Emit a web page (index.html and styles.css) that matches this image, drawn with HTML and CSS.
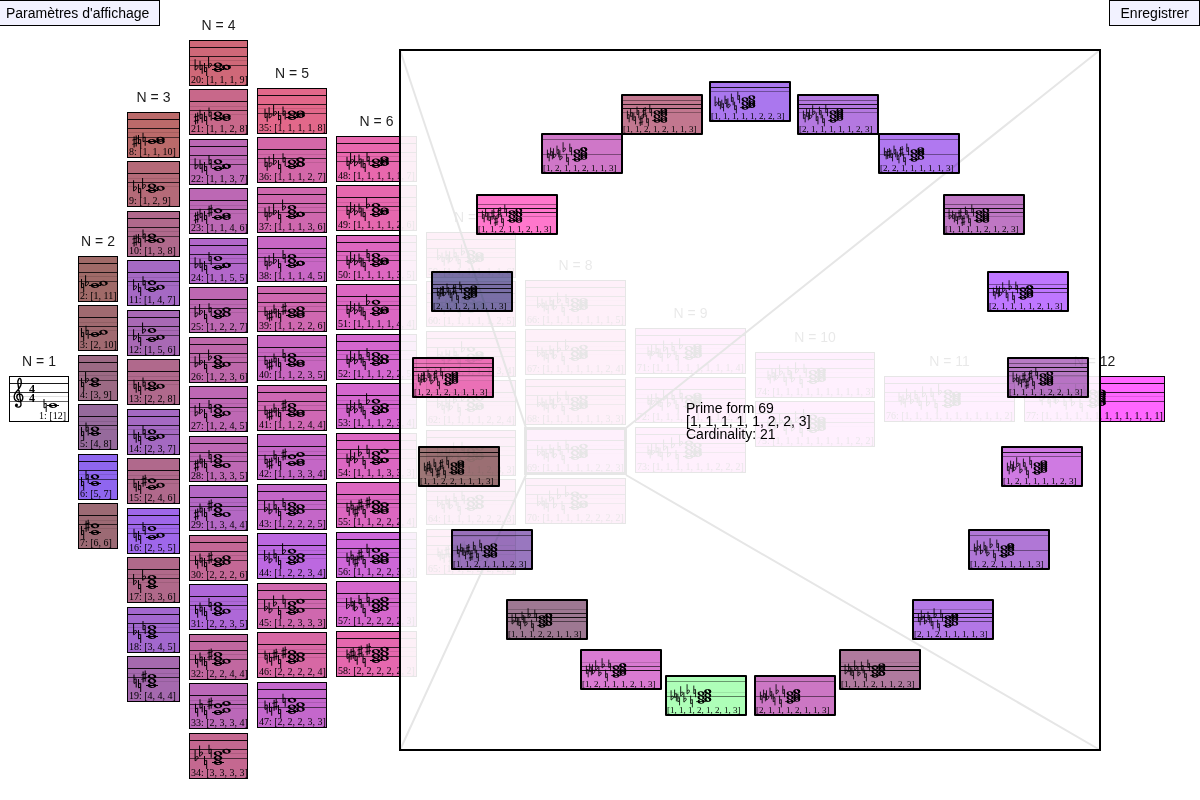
FILE: index.html
```html
<!DOCTYPE html>
<html lang="fr">
<head>
<meta charset="utf-8">
<title>Formes premières</title>
<link rel="stylesheet" href="styles.css">
</head>
<body>
<svg class="defs" aria-hidden="true">
  <defs>
    <path id="whole" fill-rule="evenodd" d="M-4.3 0C-4.3-1.6-2.3-2.5 0-2.5S4.3-1.6 4.3 0 2.3 2.5 0 2.5-4.3 1.6-4.3 0ZM-1.9-.8C-1.7-1.8-.5-2 .4-1.4 1.5-.8 2.1.1 1.9.9 1.6 1.8.5 1.9-.5 1.3-1.4.8-2.1 0-1.9-.8Z"/>
    <path id="flat" fill="none" stroke="#000" d="M-1.4-8V2.8C0 2.2 1.6.8 1.6-.6 1.6-1.8 0-1.8-1.4-.4"/>
    <path id="natural" fill="none" stroke="#000" d="M-1-6.5V2.4L1.2 1.6M1.2 6.5V-2.2L-1-1.5"/>
    <path id="sharp" fill="none" stroke="#000" d="M-.9-5V6M1.2-6V5M-2.6-1.4L2.8-2.8M-2.6 2.8L2.8 1.4"/>
  </defs>
</svg>
<header class="toolbar">
  <button class="tool tool-settings" type="button">Paramètres d'affichage</button>
  <button class="tool tool-save" type="button">Enregistrer</button>
</header>
<main class="stage">
  <section class="columns" id="columns"></section>
  <svg class="leaders" aria-hidden="true">
    <path d="M400 50L526 428M1100 50L626 428M400 750L526 475M1100 750L626 475"/>
  </svg>
  <section class="panel" id="panel">
    <p class="caption">Prime form 69<br>[1, 1, 1, 1, 1, 2, 2, 3]<br>Cardinality: 21</p>
  </section>
</main>
<script src="app.js"></script>
</body>
</html>
```
FILE: styles.css
```css
body {
  margin: 0;
  background: #fff;
  color: #000;
  font: 14px "Liberation Sans", Arial, sans-serif;
  overflow: hidden;
}

.defs {
  position: absolute;
  width: 0;
  height: 0;
}

.toolbar {
  position: absolute;
  inset: 0 0 auto;
  z-index: 2;
  display: flex;
  justify-content: space-between;
  pointer-events: none;
}

.tool {
  height: 26px;
  padding: 0 10px;
  border: 1px solid #000;
  background: #f2f2ff;
  color: #000;
  font: inherit;
  pointer-events: auto;
}

.tool-settings {
  padding: 0 10px 0 6px;
  border-left: 0;
}

.tool-save {
  padding: 0 10px 0 11px;
}

.stage {
  position: relative;
  min-height: 100vh;
}

.columns {
  display: flex;
  align-items: flex-start;
  gap: 9px;
  padding-left: 9px;
}

.column {
  flex: none;
  padding-top: calc(370px - 24px * var(--count));
}

.column-title {
  display: flex;
  justify-content: center;
  margin: 0;
  color: #1c1c1c;
  font-size: 14px;
  font-weight: 400;
  line-height: 30px;
  white-space: nowrap;
}

.card {
  box-sizing: border-box;
  display: grid;
  height: 46px;
  margin-bottom: 3px;
  border: 1px solid #000;
  overflow: hidden;
}

.card:nth-of-type(even) {
  margin-bottom: 4px;
}

.card.selected {
  outline: 3px solid #000;
  outline-offset: -2px;
}

.score,
.label {
  grid-area: 1 / 1;
}

.score {
  width: 100%;
  height: 100%;
}

.label {
  align-self: end;
  padding-left: 1px;
  font: 10px/10px "Liberation Serif", "Times New Roman", serif;
  white-space: nowrap;
}

.first .label {
  justify-self: end;
  padding-right: 2px;
}

.meter {
  font: bold 12px "Liberation Serif", "Times New Roman", serif;
}

.leaders {
  position: absolute;
  top: 0;
  left: 0;
  width: 1200px;
  height: 800px;
  fill: none;
  stroke: #000;
  stroke-width: 2px;
}

.panel {
  position: absolute;
  top: 49px;
  left: 399px;
  width: 698px;
  height: 698px;
  border: 2px solid #000;
  background: rgba(255, 255, 255, 0.9);
}

.caption {
  position: absolute;
  top: 351px;
  left: 285px;
  margin: 0;
  line-height: 13px;
  white-space: nowrap;
}

.wheel-card {
  position: absolute;
  width: 82px;
  height: 41px;
  margin: 0;
  border-width: 2px;
  border-radius: 1px;
  mix-blend-mode: multiply;
}

.wheel-card .label {
  padding-left: 0;
  font-size: 9px;
  line-height: 8px;
}
```
FILE: app.js
```js
// Each column: card width, x of the note cluster, then "intervals colour" entries.
const columns = [
  [60, 44, ["12 #ffffff"]],
  [40, 17, ["1,11 #a06a68", "2,10 #a06a70", "3,9 #9c6a84", "4,8 #966a9c", "5,7 #8f66ef", "6,6 #9c6a74"]],
  [53, 25, ["1,1,10 #bb6a6a", "1,2,9 #b56a78", "1,3,8 #b0698c", "1,4,7 #a569c4", "1,5,6 #a869b4", "2,2,8 #b0698c",
    "2,3,7 #a469c2", "2,4,6 #b0698c", "2,5,5 #9f67ea", "3,3,6 #b0698a", "3,4,5 #a268ce", "4,4,4 #a569ae"]],
  [59, 29, ["1,1,1,9 #cf6878", "1,1,2,8 #c8688a", "1,1,3,7 #bc68b4", "1,1,4,6 #bc68b4", "1,1,5,5 #b267ca", "1,2,2,7 #bd68b2",
    "1,2,3,6 #be68aa", "1,2,4,5 #be68b4", "1,3,3,5 #bd68b4", "1,3,4,4 #b468c4", "2,2,2,6 #c46896", "2,2,3,5 #ae68d8",
    "2,2,4,4 #c168a0", "2,3,3,4 #bb68b8", "3,3,3,3 #c46890"]],
  [70, 35, ["1,1,1,1,8 #e2688a", "1,1,1,2,7 #d368a8", "1,1,1,3,6 #cf68ae", "1,1,1,4,5 #c867c4", "1,1,2,2,6 #cf68b0",
    "1,1,2,3,5 #c867c0", "1,1,2,4,4 #cf68b4", "1,1,3,3,4 #c467c6", "1,2,2,2,5 #c467c8", "1,2,2,3,4 #bc68e0",
    "1,2,3,3,3 #cf68ae", "2,2,2,2,4 #d768a4", "2,2,2,3,3 #c467cc"]],
  [81, 40, ["1,1,1,1,1,7 #e868ae", "1,1,1,1,2,6 #e668ae", "1,1,1,1,3,5 #de67c0", "1,1,1,1,4,4 #dc67c2", "1,1,1,2,2,5 #d567cf",
    "1,1,1,2,3,4 #d567cf", "1,1,1,3,3,3 #dc67c2", "1,1,2,2,2,4 #dc67c0", "1,1,2,2,3,3 #ce67d8", "1,2,2,2,2,3 #d567cc",
    "2,2,2,2,2,2 #e568ae"]],
  [90, 45, ["1,1,1,1,1,1,6 #f066b8", "1,1,1,1,1,2,5 #ee66bc", "1,1,1,1,1,3,4 #ee66bc", "1,1,1,1,2,2,4 #ec66c4",
    "1,1,1,1,2,3,3 #ec66c4", "1,1,1,2,2,2,3 #ec66c4", "1,1,2,2,2,2,2 #f066b8"]],
  [101, 50, ["1,1,1,1,1,1,1,5 #f466c4", "1,1,1,1,1,1,2,4 #f466c4", "1,1,1,1,1,1,3,3 #f466c4", "1,1,1,1,1,2,2,3 #f466dc",
    "1,1,1,1,2,2,2,2 #f466c8"]],
  [111, 54, ["1,1,1,1,1,1,1,1,4 #fa66e6", "1,1,1,1,1,1,1,2,3 #fa66e6", "1,1,1,1,1,1,2,2,2 #fa66e6"]],
  [120, 58, ["1,1,1,1,1,1,1,1,1,3 #fc66f2", "1,1,1,1,1,1,1,1,2,2 #fc66f2"]],
  [131, 64, ["1,1,1,1,1,1,1,1,1,1,2 #ff66fa"]],
  [141, 69, ["1,1,1,1,1,1,1,1,1,1,1,1 #ff66ff"]]
];

// Permutations round the circle: intervals, colour, staff lines as offset:opacity.
const wheel = [
  "1,1,1,1,1,2,2,3 #aa77ee 6:.85 10:.35",
  "2,1,1,1,1,1,2,3 #b478e0 6:.4 10:.85 14:.85 18:.3",
  "2,2,1,1,1,1,1,3 #b078f0 6:.4 21:.4",
  "1,1,1,1,2,1,2,3 #bf77c4 10:.4 14:.9 18:.7 22:.2",
  "2,1,1,1,1,2,1,3 #bf77ff 13:.4 17:.9 21:.5",
  "1,1,1,1,2,2,1,3 #b77ac4 6:.4 10:.9 14:.8 18:.2",
  "1,2,1,1,1,1,2,3 #cf7ae2 6:.85 10:.4",
  "1,2,2,1,1,1,1,3 #b077d6 6:.4 21:.4",
  "2,1,2,1,1,1,1,3 #b377e6 10:.2 14:.9 18:.9 22:.5",
  "1,1,1,2,1,1,2,3 #b07a9e 13:.1 17:.9 21:.9",
  "2,1,1,1,2,1,1,3 #cc77c4 6:.4 21:.5",
  "1,1,1,2,1,2,1,3 #aeffb8 6:.4 17:.1 21:.5",
  "1,2,1,1,1,2,1,3 #d97bd2 13:.15 17:.6 21:.9",
  "1,1,1,2,2,1,1,3 #9e7892 10:.2 14:.8 18:.9 22:.5",
  "1,1,2,1,1,1,2,3 #9977bf 6:.5 21:.5",
  "1,1,2,2,1,1,1,3 #9c7676 6:.9 10:.4",
  "1,2,1,2,1,1,1,3 #ec77bb 6:.3 10:.8 14:.8 18:.3",
  "2,1,1,2,1,1,1,3 #7a76aa 13:.7 17:.9 21:.7",
  "1,1,2,1,1,2,1,3 #ff77cc 10:.4 14:.9 18:.8 22:.2",
  "1,2,1,1,2,1,1,3 #cf77c8 6:.4 21:.4",
  "1,1,2,1,2,1,1,3 #c2778f 6:.4 10:.8 14:.9 18:.3"
];

// Possible spellings per pitch class: [letter step above C, accidental].
const spellings = {
  0: [[0, "natural"]], 1: [[0, "sharp"], [1, "flat"]], 2: [[1, "natural"]], 3: [[2, "flat"]],
  4: [[2, "natural"]], 5: [[3, "natural"]], 6: [[3, "sharp"], [4, "flat"]], 7: [[4, "natural"]],
  8: [[4, "sharp"], [5, "flat"]], 9: [[5, "natural"]], 10: [[6, "flat"], [5, "sharp"]], 11: [[6, "natural"]]
};

function spell(intervals) {
  let pitch = 0;
  let options = [[]];
  const pitches = new Set();
  intervals.forEach(step => {
    const next = [];
    options.forEach(o => spellings[pitch].forEach(s => next.push([...o, s])));
    options = next;
    pitches.add(pitch);
    pitch += step;
  });
  const cost = notes => {
    const letters = new Set(notes.map(n => n[0])).size;
    const kinds = new Set(notes.map(n => n[1]));
    let total = (notes.length - letters) * 3 + (kinds.has("sharp") && kinds.has("flat") ? 1 : 0);
    // In small chords a major third above C pulls the semitone to C sharp, a fourth or fifth to D flat.
    if (notes.length < 5 && pitches.has(1)) {
      const sharp = notes[1][1] === "sharp";
      if (pitches.has(4) && !pitches.has(3) && !sharp) total += 4;
      if ((pitches.has(5) || pitches.has(7)) && !pitches.has(4) && sharp) total += 1;
    }
    return total;
  };
  return options.reduce((best, o) => (cost(o) < cost(best) ? o : best));
}

function chord(intervals, x) {
  const notes = spell(intervals);
  const yOf = step => 29.5 - 2.25 * step;
  const spread = notes.length > 5 ? 4 : 4.5;
  let out = `<path d="M${x - 6} 29.5h12" stroke="#000"/>`;
  let last = -9;
  notes.forEach(([step]) => {
    // A note a second or less above its left-hand neighbour moves right.
    const column = step - last < 2 ? 1 : 0;
    if (!column) last = step;
    out += `<use href="#whole" x="${x + column * 8.5}" y="${yOf(step)}"/>`;
  });
  // Accidentals fan out leftwards, taking the top and bottom notes in turn.
  const rest = notes.slice();
  for (let i = 0; rest.length; i++) {
    const [step, kind] = i % 2 ? rest.shift() : rest.pop();
    out += `<use href="#${kind}" x="${x - 8 - i * spread}" y="${yOf(step)}"/>`;
  }
  return out;
}

const staff = lines => lines.map(([y, o]) =>
  `<rect y="${y}" width="200" height="1" opacity="${o}"/>`).join("");

const oddStaff = [[7, 0.9], [16, 0.8], [20, 0.12], [25, 0.6]];
const evenStaff = [[12, 0.9], [17, 0.1], [21, 0.75], [25, 0.1]];

const clef = `<path fill="none" stroke="#000" stroke-width="1.4"
  d="M10 24C7 23 7 18 10.500 18 15 18 15 25.500 10 25.500 4 25.500 4 19 8 15 12 11 13 8 12 4 11 0 8 4 9 8L12 28C12.500 32 7 32 6.500 29"/>
  <circle cx="7.500" cy="29" r="1.500"/>
  <text class="meter" x="20" y="17">4</text><text class="meter" x="20" y="26">4</text>`;

let number = 0;
document.getElementById("columns").innerHTML = columns.map(([width, x, cards], c) => {
  const body = cards.map((entry, i) => {
    const [list, colour] = entry.split(" ");
    const intervals = list.split(",").map(Number);
    number++;
    const state = number === 1 ? " first" : number === 69 ? " selected" : "";
    return `<div class="card${state}" style="width:${width}px;background-color:${colour}">
      <svg class="score"><g transform="translate(-1 -1)">${staff(i % 2 ? evenStaff : oddStaff)}
      ${number === 1 ? clef : ""}${chord(intervals, x)}</g></svg>
      <span class="label">${number}: [${intervals.join(", ")}]</span></div>`;
  }).join("");
  return `<div class="column" style="--count:${cards.length};width:${width}px">
    <h2 class="column-title">N = ${c + 1}</h2>${body}</div>`;
}).join("");

document.getElementById("panel").insertAdjacentHTML("beforeend", wheel.map((entry, i) => {
  const [list, colour, ...lines] = entry.split(" ");
  const intervals = list.split(",").map(Number);
  const angle = i * 2 * Math.PI / wheel.length;
  const left = Math.round(308.4 + 298.6 * Math.sin(angle));
  const top = Math.round(328.7 - 298.6 * Math.cos(angle));
  return `<div class="card wheel-card" style="left:${left}px;top:${top}px;background-color:${colour}">
    <svg class="score"><g transform="translate(-2 -2)">${staff(lines.map(l => l.split(":")))}
    <g transform="scale(.8 .9)">${chord(intervals, 45)}</g></g></svg>
    <span class="label">[${intervals.join(", ")}]</span></div>`;
}).join(""));
```
